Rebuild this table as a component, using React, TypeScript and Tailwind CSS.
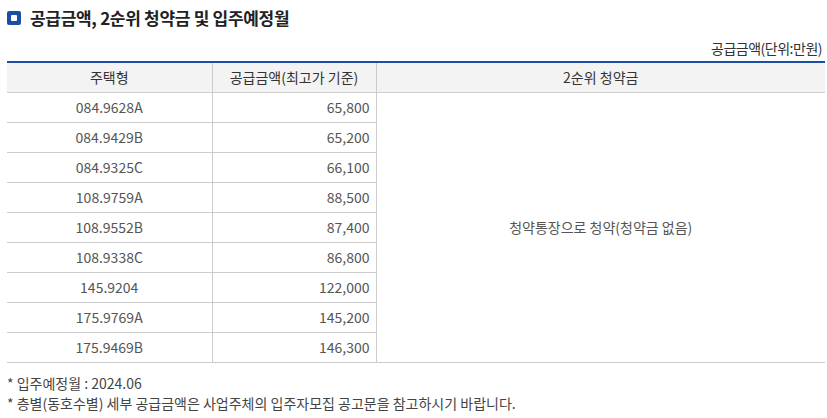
const rows = [
  ["084.9628A", "65,800"],
  ["084.9429B", "65,200"],
  ["084.9325C", "66,100"],
  ["108.9759A", "88,500"],
  ["108.9552B", "87,400"],
  ["108.9338C", "86,800"],
  ["145.9204", "122,000"],
  ["175.9769A", "145,200"],
  ["175.9469B", "146,300"],
];

export default function App() {
  return (
    <div className="w-[827px] h-[418px] bg-white pl-[7px] pr-[2px] pt-[7px] font-['Noto_Sans_CJK_KR','Noto_Sans',sans-serif] text-[#555]">
      <div className="flex items-center gap-[9px] h-[22px]">
        <span className="flex items-center justify-center w-[14px] h-[14px] rounded-[2px] bg-[#1d4ea6]">
          <span className="w-[6px] h-[6px] bg-white rounded-[1px]" />
        </span>
        <h2 className="text-[17px] font-bold text-[#222] tracking-[-0.3px]">
          공급금액, 2순위 청약금 및 입주예정월
        </h2>
      </div>

      <p className="mt-[8px] h-[22px] text-right text-[14px] text-[#333] leading-[22px] pr-[3px] tracking-[-0.5px]">
        공급금액(단위:만원)
      </p>

      <table className="mt-[2px] w-full border-collapse border-t-2 border-t-[#1d4ea6] text-[14px]">
        <thead>
          <tr className="h-[30px] bg-[#f3f3f3] text-[#333]">
            <th className="w-[205px] border-b border-r border-[#cccccc] font-normal">주택형</th>
            <th className="w-[164px] border-b border-r border-[#cccccc] font-normal">공급금액(최고가 기준)</th>
            <th className="border-b border-[#cccccc] font-normal">2순위 청약금</th>
          </tr>
        </thead>
        <tbody>
          {rows.map(([type, price], i) => (
            <tr key={type} className="h-[30px]">
              <td className="border-b border-r border-[#cccccc] text-center">{type}</td>
              <td className="border-b border-r border-[#cccccc] text-right pr-[6px]">{price}</td>
              {i === 0 && (
                <td rowSpan={rows.length} className="border-b border-[#cccccc] text-center">
                  청약통장으로 청약(청약금 없음)
                </td>
              )}
            </tr>
          ))}
        </tbody>
      </table>

      <div className="mt-[10px] text-[14px] leading-[20px] text-[#444]">
        <p>* 입주예정월 : 2024.06</p>
        <p>* 층별(동호수별) 세부 공급금액은 사업주체의 입주자모집 공고문을 참고하시기 바랍니다.</p>
      </div>
    </div>
  );
}
